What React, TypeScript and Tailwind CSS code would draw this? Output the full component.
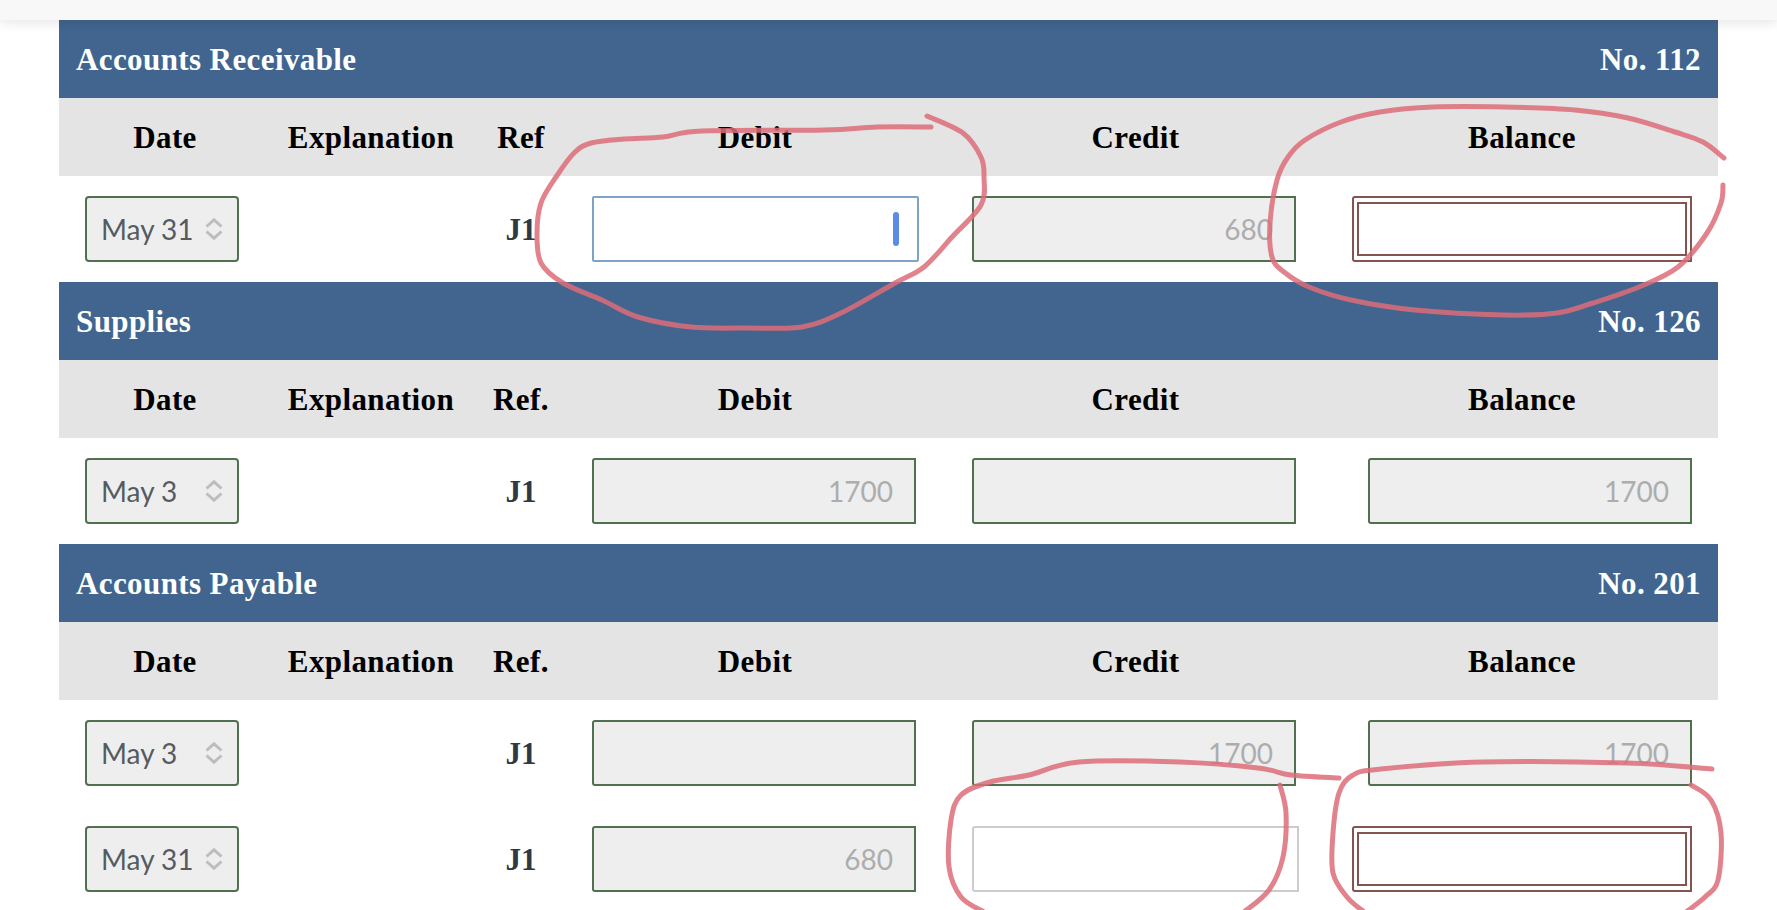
const strokes: [number, number][][] = [
  [[931,127],[877,127],[824,130],[702,131],[663,137],[624,139],[591,143],[574,153],[556,177],[541,203],[537,233],[541,263],[563,283],[602,300],[638,317],[691,327],[749,328],[802,327],[841,313],[895,283],[924,267],[952,237],[981,205],[984,177],[981,157],[963,133],[927,116]],
  [[1724,158],[1703,142],[1675,132],[1628,118],[1575,110],[1504,107],[1433,107],[1380,112],[1341,122],[1305,140],[1288,157],[1277,180],[1270,223],[1272,257],[1284,272],[1309,287],[1351,300],[1415,310],[1504,315],[1557,313],[1593,303],[1639,287],[1678,267],[1707,233],[1721,203],[1723,185]],
  [[1339,778],[1291,775],[1258,768],[1180,762],[1079,762],[1029,775],[990,782],[961,795],[951,820],[949,867],[961,897],[984,912]],
  [[1280,785],[1286,813],[1283,857],[1269,890],[1244,912]],
  [[1712,769],[1627,763],[1482,762],[1381,769],[1353,775],[1339,793],[1333,833],[1333,873],[1347,897],[1364,912]],
  [[1691,785],[1711,800],[1721,833],[1718,880],[1705,897],[1686,912]],
];

// smooth line through the points
function toPath(pts: [number, number][]) {
  let d = `M${pts[0][0]} ${pts[0][1]}`;
  for (let i = 0; i < pts.length - 1; i++) {
    const p0 = pts[i - 1] || pts[i];
    const p1 = pts[i];
    const p2 = pts[i + 1];
    const p3 = pts[i + 2] || p2;
    const c1x = p1[0] + (p2[0] - p0[0]) / 6;
    const c1y = p1[1] + (p2[1] - p0[1]) / 6;
    const c2x = p2[0] - (p3[0] - p1[0]) / 6;
    const c2y = p2[1] - (p3[1] - p1[1]) / 6;
    d += ` C${c1x} ${c1y} ${c2x} ${c2y} ${p2[0]} ${p2[1]}`;
  }
  return d;
}

const cols = "grid grid-cols-[212px_200px_100px_368px_393px_386px]";
const serif = "font-['Liberation_Serif',serif] font-bold";

function DateSelect({ value }: { value: string }) {
  return (
    <div className="ml-[26px] flex h-[66px] w-[154px] items-center justify-between rounded-[4px] border-2 border-[#50704f] bg-[#eeeeee] pl-[14px] pr-[14px] font-['Lato',sans-serif] text-[28px] text-[#555b60]">
      <span>{value}</span>
      <svg width="18" height="22" viewBox="0 0 18 22" fill="none" stroke="#bdbdbd" strokeWidth="3">
        <path d="M1.5 8.5 9 1.8l7.5 6.7" />
        <path d="M1.5 13.5 9 20.2l7.5-6.7" />
      </svg>
    </div>
  );
}

function Filled({ value, className = "" }: { value?: string; className?: string }) {
  return (
    <div className={`flex h-[66px] items-center justify-end rounded-l-[3px] border-2 border-[#50704f] bg-[#eeeeee] pr-[21px] font-['Lato',sans-serif] text-[28px] text-[#adadad] ${className}`}>
      {value}
    </div>
  );
}

function DoubleBox() {
  return (
    <div className="ml-auto mr-[26px] h-[66px] w-[340px] rounded-l-[3px] border-2 border-[#865353] px-[3px] py-[4px]">
      <div className="h-full w-full border-2 border-[#865353]" />
    </div>
  );
}

function Ledger({ title, no, ref, rows }: { title: string; no: string; ref: string; rows: React.ReactNode }) {
  return (
    <div>
      <div className={`flex h-[78px] items-center justify-between bg-[#41658f] px-[17px] pt-[2px] text-[31px] tracking-[0.4px] text-white ${serif}`}>
        <span>{title}</span>
        <span>{no}</span>
      </div>
      <div className={`${cols} h-[78px] items-center bg-[#e4e4e4] pt-[2px] text-center text-[31px] tracking-[0.4px] text-black ${serif}`}>
        <span>Date</span>
        <span>Explanation</span>
        <span>{ref}</span>
        <span>Debit</span>
        <span>Credit</span>
        <span className="pr-[6px]">Balance</span>
      </div>
      {rows}
    </div>
  );
}

function Row({ date, debit, credit, balance }: { date: string; debit: React.ReactNode; credit: React.ReactNode; balance: React.ReactNode }) {
  return (
    <div className={`${cols} h-[106px] items-center bg-white`}>
      <DateSelect value={date} />
      <div />
      <div className={`pt-[2px] text-center text-[31px] text-[#2d3a45] ${serif}`}>J1</div>
      <div className="pl-[21px]">{debit}</div>
      <div className="pl-[33px]">{credit}</div>
      <div>{balance}</div>
    </div>
  );
}

export default function App() {
  return (
    <div className="relative h-[910px] w-[1777px] overflow-hidden bg-white">
      <div className="relative z-10 h-[20px] bg-[#f8f8f8] shadow-[0_3px_12px_rgba(0,0,0,0.1)]" />
      <div className="mx-[59px]">
        <Ledger
          title="Accounts Receivable"
          no="No. 112"
          ref="Ref"
          rows={
            <Row
              date="May 31"
              debit={
                <div className="flex h-[66px] w-[327px] items-center justify-end rounded-[2px] border-2 border-[#7fa3c6] bg-white pr-[18px]">
                  <div className="h-[34px] w-[6px] rounded-full bg-[#5b8de8]" />
                </div>
              }
              credit={<Filled value="680" className="w-[324px]" />}
              balance={<DoubleBox />}
            />
          }
        />
        <Ledger
          title="Supplies"
          no="No. 126"
          ref="Ref."
          rows={
            <Row
              date="May 3"
              debit={<Filled value="1700" className="w-[324px]" />}
              credit={<Filled className="w-[324px]" />}
              balance={<Filled value="1700" className="ml-auto mr-[26px] w-[324px]" />}
            />
          }
        />
        <Ledger
          title="Accounts Payable"
          no="No. 201"
          ref="Ref."
          rows={
            <>
              <Row
                date="May 3"
                debit={<Filled className="w-[324px]" />}
                credit={<Filled value="1700" className="w-[324px]" />}
                balance={<Filled value="1700" className="ml-auto mr-[26px] w-[324px]" />}
              />
              <Row
                date="May 31"
                debit={<Filled value="680" className="w-[324px]" />}
                credit={<div className="h-[66px] w-[327px] rounded-l-[3px] border-2 border-[#cccccc] bg-white" />}
                balance={<DoubleBox />}
              />
            </>
          }
        />
      </div>
      {/* pen marks drawn over the page */}
      <svg className="absolute left-0 top-0 z-20" width="1777" height="910" viewBox="0 0 1777 910" fill="none">
        {strokes.map((s, i) => (
          <path key={i} d={toPath(s)} stroke="#dd6c78" strokeOpacity="0.85" strokeWidth="5" strokeLinecap="round" strokeLinejoin="round" />
        ))}
      </svg>
    </div>
  );
}
